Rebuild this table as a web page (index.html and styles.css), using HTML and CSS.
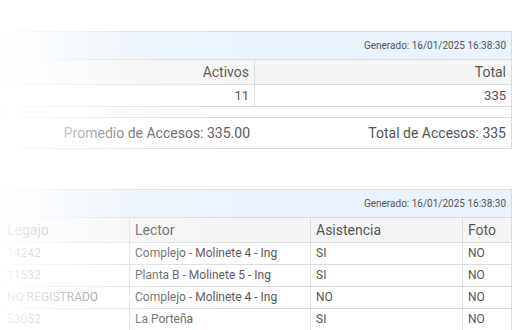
FILE: index.html
```html
<!DOCTYPE html>
<html lang="es">
<head>
<meta charset="utf-8">
<link rel="stylesheet" href="styles.css">
</head>
<body>
<div class="page">
  <section class="panel summary">
    <div class="band">Generado: 16/01/2025 16:38:30</div>
    <div class="grid sum-cols head">
      <div class="cell r">Activos</div>
      <div class="cell r">Total</div>
    </div>
    <div class="grid sum-cols row">
      <div class="cell r">11</div>
      <div class="cell r">335</div>
    </div>
    <div class="spacer"></div>
    <div class="totals">
      <span class="tot">Promedio de Accesos: 335.00</span>
      <span class="tot">Total de Accesos: 335</span>
    </div>
  </section>

  <section class="panel detail">
    <div class="band">Generado: 16/01/2025 16:38:30</div>
    <div class="grid det-cols head">
      <div class="cell">Legajo</div>
      <div class="cell">Lector</div>
      <div class="cell">Asistencia</div>
      <div class="cell">Foto</div>
    </div>
    <div class="grid det-cols row">
      <div class="cell">14242</div>
      <div class="cell">Complejo - Molinete 4 - Ing</div>
      <div class="cell">SI</div>
      <div class="cell">NO</div>
    </div>
    <div class="grid det-cols row">
      <div class="cell">11532</div>
      <div class="cell">Planta B - Molinete 5 - Ing</div>
      <div class="cell">SI</div>
      <div class="cell">NO</div>
    </div>
    <div class="grid det-cols row">
      <div class="cell">NO REGISTRADO</div>
      <div class="cell">Complejo - Molinete 4 - Ing</div>
      <div class="cell">NO</div>
      <div class="cell">NO</div>
    </div>
    <div class="grid det-cols row">
      <div class="cell">53052</div>
      <div class="cell">La Porteña</div>
      <div class="cell">SI</div>
      <div class="cell">NO</div>
    </div>
  </section>
  <div class="fade"></div>
</div>
</body>
</html>
```

FILE: styles.css
```css
* { box-sizing: border-box; }
html, body { margin: 0; padding: 0; background: #fff; }
body {
  font-family: Roboto, "Liberation Sans", Arial, sans-serif;
  color: #555;
  overflow: hidden;
}
.page {
  position: relative;
  padding: 31px 8px 0 1px;
  height: 330px;
}
.panel {
  border: 1px solid #dcdcdc;
  background: #fff;
}
.detail {
  margin-top: 40px;
  border-bottom: none;
}
.band {
  height: 28px;
  background: #eaf3fc;
  border-bottom: 1px solid #dcdcdc;
  font-size: 10px;
  text-align: right;
  padding: 8px 5px 0 0;
  line-height: 12px;
  color: #555;
}
.grid {
  display: grid;
  border-bottom: 1px solid #dcdcdc;
}
.sum-cols { grid-template-columns: 253px 1fr; }
.det-cols { grid-template-columns: 128px 181px 152px 1fr; }
.cell {
  border-right: 1px solid #dcdcdc;
  padding: 0 5px;
  white-space: nowrap;
  overflow: hidden;
}
.cell:last-child { border-right: none; }
.cell.r { text-align: right; }
.head {
  height: 25px;
  background: #f5f5f5;
  font-size: 14px;
  line-height: 24px;
}
.row {
  height: 22px;
  font-size: 12px;
  line-height: 21px;
}
.summary .row { font-size: 13px; }
.spacer {
  height: 11px;
  border-bottom: 1px solid #dcdcdc;
}
.totals {
  display: grid;
  grid-template-columns: 253px 1fr;
  height: 30px;
  font-size: 14px;
  line-height: 30px;
  text-align: right;
}
.tot { padding: 0 5px; }
.fade {
  position: absolute;
  left: 0;
  top: 0;
  width: 260px;
  height: 330px;
  pointer-events: none;
  background: linear-gradient(to right,
    rgba(255,255,255,0.93) 0px,
    rgba(255,255,255,0.8) 40px,
    rgba(255,255,255,0.58) 80px,
    rgba(255,255,255,0.25) 135px,
    rgba(255,255,255,0.08) 200px,
    rgba(255,255,255,0) 260px);
}
```
